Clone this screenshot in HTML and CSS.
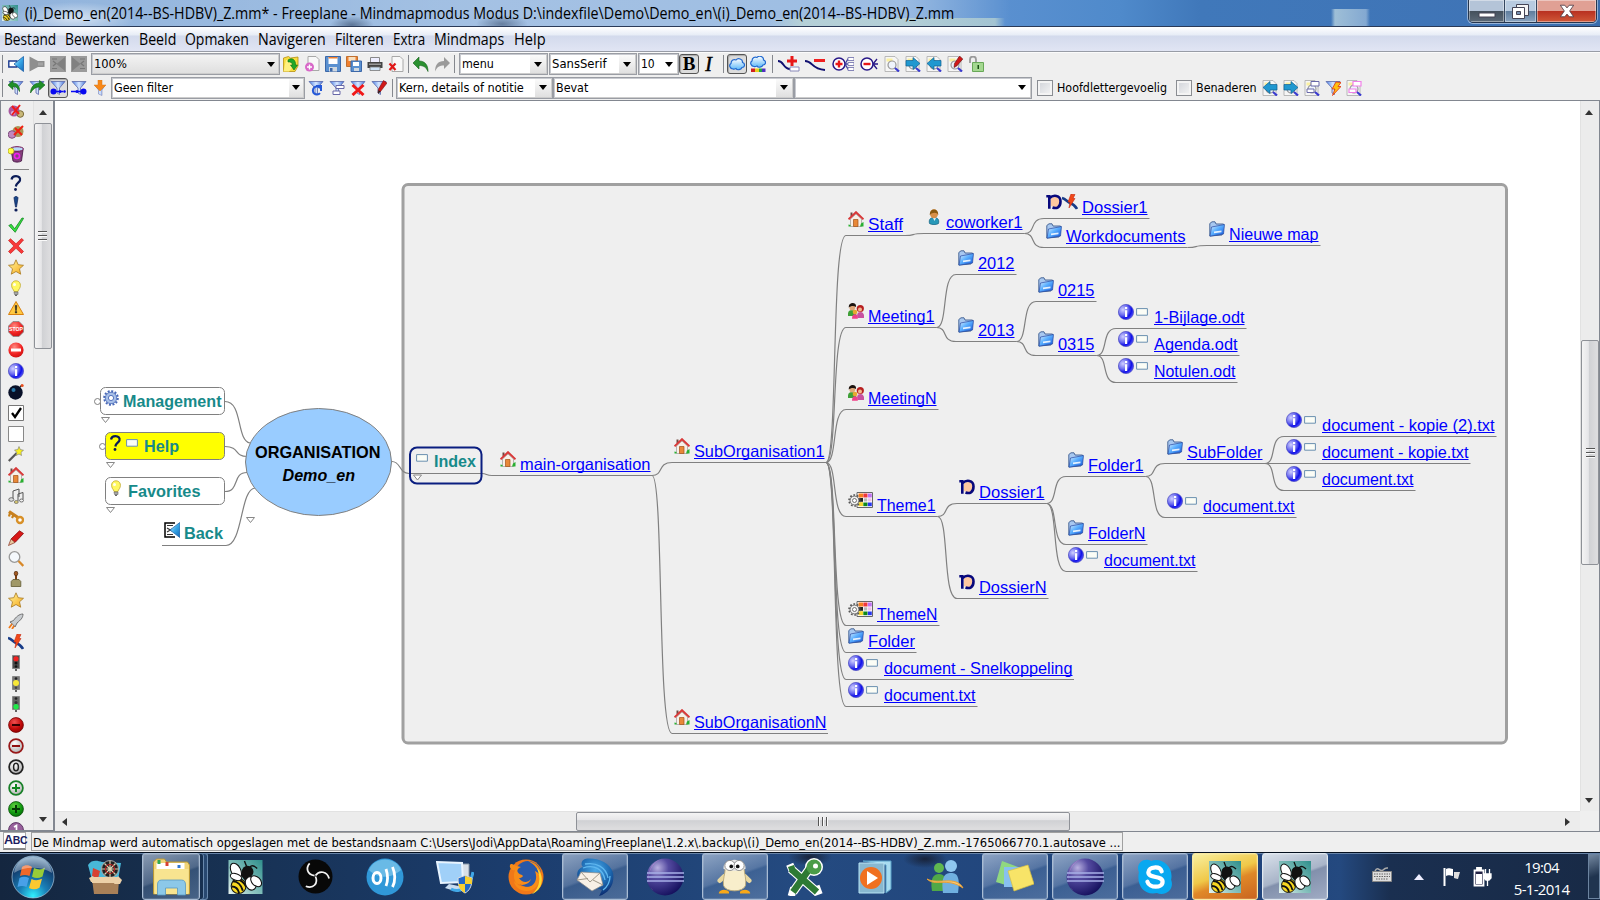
FILE: index.html
```html
<!DOCTYPE html>
<html lang="nl">
<head>
<meta charset="utf-8">
<title>Freeplane</title>
<link rel="stylesheet" href="styles.css">
</head>
<body>
<svg class="defs" aria-hidden="true">
<defs>
<linearGradient id="gBlue" x1="0" y1="0" x2="1" y2="1"><stop offset="0" stop-color="#d8f2ff"/><stop offset=".5" stop-color="#3aa9e8"/><stop offset="1" stop-color="#1268b8"/></linearGradient>
<linearGradient id="gFold" x1="0" y1="0" x2="1" y2="1"><stop offset="0" stop-color="#e8f6ff"/><stop offset=".45" stop-color="#5cb0ff"/><stop offset="1" stop-color="#0c50d8"/></linearGradient>
<radialGradient id="gInfo" cx=".3" cy=".35" r=".8"><stop offset="0" stop-color="#d0d0ff"/><stop offset=".45" stop-color="#6a6af0"/><stop offset=".7" stop-color="#1010e8"/><stop offset="1" stop-color="#6a6aff"/></radialGradient>
<radialGradient id="gRed" cx=".4" cy=".3" r=".8"><stop offset="0" stop-color="#ff8a80"/><stop offset=".6" stop-color="#f02020"/><stop offset="1" stop-color="#c01010"/></radialGradient>
<radialGradient id="gDkRed" cx=".4" cy=".3" r=".8"><stop offset="0" stop-color="#f05050"/><stop offset=".6" stop-color="#c00808"/><stop offset="1" stop-color="#800"/></radialGradient>
<radialGradient id="gGreen" cx=".4" cy=".3" r=".8"><stop offset="0" stop-color="#60d040"/><stop offset=".6" stop-color="#109810"/><stop offset="1" stop-color="#065f06"/></radialGradient>
<radialGradient id="gGrey" cx=".4" cy=".3" r=".8"><stop offset="0" stop-color="#fff"/><stop offset="1" stop-color="#a8a8a8"/></radialGradient>
<linearGradient id="gStar" x1="0" y1="0" x2="1" y2="1"><stop offset="0" stop-color="#fff6a0"/><stop offset="1" stop-color="#f8a818"/></linearGradient>
<radialGradient id="gEcl" cx=".3" cy=".25" r=".85"><stop offset="0" stop-color="#b8b0e0"/><stop offset=".35" stop-color="#544aa0"/><stop offset="1" stop-color="#100c58"/></radialGradient>
<linearGradient id="gTeal" x1="0" y1="1" x2="1" y2="0"><stop offset="0" stop-color="#e8f4f0"/><stop offset=".4" stop-color="#8cc4c0"/><stop offset="1" stop-color="#2f8f8c"/></linearGradient>
<radialGradient id="gOrb" cx=".5" cy=".95" r=".95"><stop offset="0" stop-color="#30f0ff"/><stop offset=".35" stop-color="#1a80b8"/><stop offset=".75" stop-color="#123f70"/><stop offset="1" stop-color="#7fa8c8"/></radialGradient>
<linearGradient id="gCloud" x1="0" y1="0" x2="0" y2="1"><stop offset="0" stop-color="#fff"/><stop offset="1" stop-color="#5cb8f8"/></linearGradient>
<linearGradient id="gFun" x1="0" y1="0" x2="1" y2="0"><stop offset="0" stop-color="#4a80e8"/><stop offset=".5" stop-color="#d8e8ff"/><stop offset="1" stop-color="#4070d8"/></linearGradient>
<radialGradient id="gTb" cx=".5" cy=".3" r=".7"><stop offset="0" stop-color="#48a8e8"/><stop offset=".6" stop-color="#1c68b0"/><stop offset="1" stop-color="#0c2c70"/></radialGradient>

<symbol id="funnel" viewBox="0 0 16 16"><path d="M1 1.500h14L9.500 8v6.500L7 13V8z" fill="url(#gFun)" stroke="#5a68a8" stroke-width=".8"/></symbol>
<symbol id="page" viewBox="0 0 16 16"><path d="M1 .5h10l3 3v12H1z" fill="#f6f6f6" stroke="#aaa" stroke-width=".8"/><path d="M2.500 2.500h6v3h-6z" fill="#fbf0a0"/></symbol>
<symbol id="pagemag" viewBox="0 0 16 16"><use href="#page"/><circle cx="8" cy="9" r="4" fill="#eef4ff" fill-opacity=".8" stroke="#999" stroke-width="1.200"/><path d="M11 12l4 3.500" stroke="#3a3ad0" stroke-width="2.200"/></symbol>
<symbol id="back" viewBox="0 0 16 16"><path d="M.8 5h8v6h-8z" fill="#fff" stroke="#1a3a90" stroke-width="1.400"/><path d="M15.500.5v15L6 8z" fill="url(#gBlue)" stroke="#1a60a8" stroke-width=".8"/></symbol>
<symbol id="fwd" viewBox="0 0 16 16"><path d="M.5.5v15L9 11h6.500V5H9z" fill="#8f8f8f"/><path d="M9 6.500h5v3H9z" fill="#a4a4a4"/></symbol>
<symbol id="gback" viewBox="0 0 16 16"><path d="M0 0h16v16H0z" fill="#9a9a9a"/><path d="M2 3h5M2 12.500h5M3 5l3 2.500L3 10" fill="none" stroke="#777" stroke-width="1.200"/><path d="M15 1v14L6.500 8z" fill="#808080"/></symbol>
<symbol id="gfwd" viewBox="0 0 16 16"><path d="M0 0h16v16H0z" fill="#9a9a9a"/><path d="M9 3h5M9 12.500h5M13 5l-3 2.500L13 10" fill="none" stroke="#777" stroke-width="1.200"/><path d="M1 1v14l8.500-7z" fill="#808080"/></symbol>
<symbol id="open" viewBox="0 0 16 16"><path d="M.5 2l5-1.500 2 1.500L15 1v9l-3 5.500H.5z" fill="#f8dc40" stroke="#b89010" stroke-width=".8"/><path d="M3 4h6v8l-3 3.500H.5z" fill="#fff080"/><path d="M5 4c4-3 8 0 7.500 5h2L11 14 7.500 9h2C9.500 6.500 7 5.500 5 6z" fill="#20a828" stroke="#0a7010" stroke-width=".6"/></symbol>
<symbol id="new" viewBox="0 0 16 16"><path d="M4 .5h8l3 3v11H4z" fill="#f8f8f8" stroke="#a8a8a8"/><circle cx="5.500" cy="11" r="4.500" fill="#d868c8"/><path d="M5.500 8.500v5M3 11h5" stroke="#fff" stroke-width="1.400"/></symbol>
<symbol id="save" viewBox="0 0 16 16"><path d="M.5.5h15v15H.5z" fill="#5a90d0" stroke="#3c68a8"/><path d="M3.500 1h9v7h-9z" fill="#fff"/><path d="M3.500 1h9v1.500h-9z" fill="#f08030"/><path d="M4 11h8v4.500H4z" fill="#d0d8e0"/><path d="M5 12h2.500v3.500H5z" fill="#3c68a8"/></symbol>
<symbol id="saveas" viewBox="0 0 16 16"><path d="M.5.5h11v10H.5z" fill="#f08030" stroke="#c07030"/><path d="M2.500 1h7v4h-7z" fill="#f8e0c0"/><path d="M5 5h10.500v10.500H5z" fill="#5a90d0" stroke="#3c68a8"/><path d="M7 6h6v4H7z" fill="#fff"/><path d="M8 12h5v3H8z" fill="#d0d8e0"/></symbol>
<symbol id="print" viewBox="0 0 16 16"><path d="M3.500 1.500h9v5h-9z" fill="#eef" stroke="#888"/><path d="M.5 6h15v6H.5z" fill="#444"/><path d="M2 7.500h12V9H2z" fill="#999"/><path d="M3 11h10v3.500H3z" fill="#cfe4f8" stroke="#777" stroke-width=".8"/></symbol>
<symbol id="close" viewBox="0 0 16 16"><path d="M4 .5h8l3 3v12H4z" fill="#f8f8f8" stroke="#a8a8a8"/><path d="M1.500 7.500l6 6.500M7.500 7.500l-6 6.500" stroke="#e01818" stroke-width="2.200"/></symbol>
<symbol id="undo" viewBox="0 0 16 16"><path d="M6 1v4c6 0 9 4 9 10.500C13 11 10.500 9.500 6 9.500V13L0 7z" fill="#2a9030" stroke="#126018" stroke-width=".6"/></symbol>
<symbol id="redo" viewBox="0 0 16 16"><path d="M10 1v4c-6 0-9 4-9 10.500C3 11 5.500 9.500 10 9.500V13l6-6z" fill="#9a9a9a"/></symbol>
<symbol id="funundo" viewBox="0 0 16 16"><use href="#funnel"/><path d="M5 .5V3c4 0 7 3 6.500 8.500C10 8 8 6.500 5 6.500V9.500L0 5z" fill="#209028" stroke="#126018" stroke-width=".6"/></symbol>
<symbol id="funredo" viewBox="0 0 16 16"><use href="#funnel"/><path d="M10.500.5V3c-5 0-9 4-9 10C4 9 6.500 7 10.500 7v3L16 5z" fill="#209028" stroke="#126018" stroke-width=".6"/></symbol>
<symbol id="funa" viewBox="0 0 16 16"><use href="#funnel"/><circle cx="3.500" cy="11.500" r="3" fill="#0808f0"/><path d="M6 11.500h9" stroke="#0808f0" stroke-width="1.500" stroke-dasharray="3 1"/><circle cx="10" cy="11.500" r="1.500" fill="#0808f0"/><circle cx="14.500" cy="11.500" r="1.300" fill="#0808f0"/></symbol>
<symbol id="funb" viewBox="0 0 16 16"><use href="#funnel"/><circle cx="12.500" cy="11.500" r="3" fill="#0808f0"/><path d="M0 11.500h10" stroke="#0808f0" stroke-width="1.500"/><circle cx="6" cy="11.500" r="1.500" fill="#0808f0"/></symbol>
<symbol id="func" viewBox="0 0 16 16"><path d="M3 5.500h10L10 10v5.500L6.500 14v-4z" fill="url(#gFun)" stroke="#8088b8" stroke-width=".6"/><path d="M6 0h4v5h4l-6 6-6-6h4z" fill="#f88818" stroke="#d87818" stroke-width=".5"/></symbol>
<symbol id="fund" viewBox="0 0 16 16"><use href="#funnel"/><path d="M12 8a4 4 0 1 0 0 5M8 6h5v5" fill="none" stroke="#2458d8" stroke-width="2"/></symbol>
<symbol id="fune" viewBox="0 0 16 16"><use href="#funnel"/><path d="M7 5.500h8v3H7zM4 11h7v3.500H4z" fill="#fff" stroke="#6868a8"/></symbol>
<symbol id="funx" viewBox="0 0 16 16"><use href="#funnel"/><path d="M2.500 5l11 10M13.500 5l-11 10" stroke="#f01818" stroke-width="3"/></symbol>
<symbol id="funpen" viewBox="0 0 16 16"><use href="#funnel"/><path d="M12.500.5L16 3 9.500 11.500 7 13l.5-4z" fill="#d01818" stroke="#801010" stroke-width=".6"/><path d="M9.500 11.500L7 14l.5-4z" fill="#222"/></symbol>
<symbol id="funflash" viewBox="0 0 16 16"><use href="#funnel"/><path d="M11 2l5 .5-3 4h3L7.500 15.500 10 9H7z" fill="#ffc010" stroke="#e03010" stroke-width=".8"/></symbol>
<symbol id="cloud" viewBox="0 0 16 16"><path d="M4 13C1 13-.5 9 2 7.500 2 4 5 3 7 4c2-2.500 7-1 6.500 2.500 3 1 2.500 5-.5 5C12 14 8 14.500 7 12.500 6 13 5 13.500 4 13z" fill="url(#gCloud)" stroke="#2068d0" stroke-width="1.200"/></symbol>
<symbol id="cloudc" viewBox="0 0 16 16"><use href="#cloud" y="-2.500"/><path d="M1 12.500h4V16H1z" fill="#d02020"/><path d="M5 12.500h4V16H5z" fill="#e8d020"/><path d="M9 12.500h3V16H9z" fill="#20a840"/><path d="M12 12.500h3.500V16H12z" fill="#5030c0"/></symbol>
<symbol id="addn" viewBox="0 0 22 16"><path d="M0 5c6 0 5 8 12 8" fill="none" stroke="#101070" stroke-width="2"/><path d="M12 11h9v4h-9z" fill="#fff" stroke="#8888b8"/><path d="M14 0v10M9 5h10" stroke="#e81818" stroke-width="3"/></symbol>
<symbol id="remn" viewBox="0 0 22 16"><path d="M0 5c8 0 6 8 20 9" fill="none" stroke="#101070" stroke-width="2"/><path d="M9 4.500h11" stroke="#f02020" stroke-width="3"/></symbol>
<symbol id="unf" viewBox="0 0 22 16"><circle cx="7" cy="8" r="6" fill="#fff" stroke="#281888" stroke-width="1.500"/><path d="M7 4.500v7M3.500 8h7" stroke="#e81818" stroke-width="2.400"/><path d="M13 8l3-5h5M13 8l3 5h5M13 8h8" stroke="#4040a0" fill="none" stroke-width="1.300"/><path d="M16 1.500h6v3h-6zM16 6.500h6v3h-6zM16 11.500h6v3h-6z" fill="#fff" stroke="#7878b0" stroke-width=".9"/></symbol>
<symbol id="fol" viewBox="0 0 22 16"><circle cx="8" cy="8" r="6" fill="#fff" stroke="#281888" stroke-width="1.500"/><path d="M4.500 8h7" stroke="#e81818" stroke-width="2.400"/><path d="M14 8l4-5M14 8l4 5M14 8h5" stroke="#281888" fill="none" stroke-width="1.300"/></symbol>
<symbol id="pright" viewBox="0 0 16 16"><use href="#pagemag"/><path d="M1 4.500h7V1.500l7 6L8 13.500v-3.500H1z" fill="#2098d0" stroke="#106090" stroke-width=".7"/></symbol>
<symbol id="pleft" viewBox="0 0 16 16"><use href="#pagemag"/><path d="M15 4.500H8V1.500L1 7.500l7 6v-3.500h7z" fill="#2098d0" stroke="#106090" stroke-width=".7"/></symbol>
<symbol id="ppen" viewBox="0 0 16 16"><use href="#pagemag"/><path d="M12.500 0l3.300 3-6 7L7 11.500l.5-4z" fill="#d01818" stroke="#601010" stroke-width=".6"/></symbol>
<symbol id="pnode" viewBox="0 0 16 16"><use href="#pagemag"/><path d="M7 1.500h8V6H7zM3 9h7v3.500H3z" fill="#fff" stroke="#6868a8"/></symbol>
<symbol id="pnodep" viewBox="0 0 16 16"><use href="#pagemag"/><path d="M7 1.500h8V6H7zM3 9h7v3.500H3z" fill="#fff" stroke="#f080e8" stroke-width="1.200"/></symbol>
<symbol id="lock" viewBox="0 0 16 16"><path d="M2 7V3.500a3 3 0 0 1 6 0V7" fill="none" stroke="#9a9a9a" stroke-width="1.800"/><path d="M4.500 6.500h11v9h-11z" fill="#a4d890" stroke="#68a858"/><path d="M9.500 9h1.500v4H9.500z" fill="#185010"/></symbol>

<symbol id="rm1" viewBox="0 0 16 16"><circle cx="6" cy="8" r="5.500" fill="#a858a0"/><circle cx="12.300" cy="11" r="3.300" fill="#c8b878" stroke="#7a6a38"/><circle cx="5" cy="10" r="2" fill="#dcb8e0"/><path d="M4 3l7 8M12 2L4 12" stroke="#f01818" stroke-width="2"/></symbol>
<symbol id="rm2" viewBox="0 0 16 16"><circle cx="10" cy="7.500" r="5.500" fill="#a89858"/><circle cx="4" cy="10.500" r="3.800" fill="#c088c0" stroke="#805080"/><path d="M7 4l7 7M15 2L6 11" stroke="#f02010" stroke-width="2"/></symbol>
<symbol id="trash" viewBox="0 0 16 16"><path d="M3 4h12l-1.500 11C11 16.500 7 16.500 5 15z" fill="#84407c" stroke="#401040" stroke-width=".8"/><ellipse cx="9" cy="3" rx="6.500" ry="2.300" fill="#b8d8f8" stroke="#701050"/><circle cx="3" cy="5" r="3" fill="#ffff40" stroke="#a09010" stroke-width=".6"/><circle cx="9" cy="10" r="2.500" fill="none" stroke="#f020f0" stroke-width="1.600"/></symbol>
<symbol id="q" viewBox="0 0 16 16"><path d="M3.500 4.500C4 2 6 1.200 8 1.200c3 0 4.500 1.800 4 4C11.600 7.600 8.300 8 7.800 11.500" fill="none" stroke="#0c1c58" stroke-width="2.200"/><circle cx="7.500" cy="14.500" r="1.400" fill="#0c1c58"/></symbol>
<symbol id="ex" viewBox="0 0 16 16"><path d="M6 2c0-2 4-2 4 0L8.500 11h-1z" fill="#184888" stroke="#0c1c58" stroke-width=".7"/><circle cx="8" cy="14" r="1.600" fill="#0c1c58"/></symbol>
<symbol id="ok" viewBox="0 0 16 16"><path d="M.8 8.500l2.500-1.200 3.400 4.500L14 1l1.600.3L7.200 15.300z" fill="#38e040" stroke="#108820" stroke-width=".8"/></symbol>
<symbol id="no" viewBox="0 0 16 16"><path d="M.5 2.500L2.500.8 8 5.800 13.500.5l2 1.500L10.200 8l5.300 5.500-2 2L8 10.300l-5.500 5.200-2-2L5.800 8z" fill="#f83838" stroke="#c82020" stroke-width=".7"/></symbol>
<symbol id="star" viewBox="0 0 16 16"><path d="M8 .8l2.200 4.900 5.300.6-4 3.500 1.200 5.400L8 12.500l-4.700 2.700 1.200-5.400-4-3.500 5.300-.6z" fill="url(#gStar)" stroke="#a87820" stroke-width=".8"/></symbol>
<symbol id="bulb" viewBox="0 0 16 16"><path d="M5.500 10C2 6 3.500.8 8 .8S14 6 10.500 10l-.5 1.500H6z" fill="#fff860" stroke="#c0a830" stroke-width=".8"/><path d="M6 12h4v2.500H6.500z" fill="#aaa" stroke="#666" stroke-width=".6"/><path d="M7 15.300h2" stroke="#444"/><circle cx="6.500" cy="4.500" r="1.500" fill="#fffff0"/></symbol>
<symbol id="warn" viewBox="0 0 16 16"><path d="M8 1.500L15.500 14.500H.5z" fill="#ffc840" stroke="#d88010" stroke-linejoin="round"/><path d="M7.200 5.500h1.600l-.4 5h-.8zM7.300 11.500h1.400V13H7.300z" fill="#222" stroke="#222" stroke-width=".5"/></symbol>
<symbol id="stop" viewBox="0 0 16 16"><path d="M5 .5h6L15.500 5v6L11 15.500H5L.5 11V5z" fill="url(#gRed)" stroke="#888" stroke-width=".8"/><text x="8" y="10" text-anchor="middle" font-size="5.200" font-weight="700" fill="#fff" font-family="Liberation Sans">STOP</text></symbol>
<symbol id="deny" viewBox="0 0 16 16"><circle cx="8" cy="8" r="7.600" fill="url(#gRed)"/><path d="M3 6.500h10v3H3z" fill="#fff"/></symbol>
<symbol id="info" viewBox="0 0 16 16"><circle cx="8" cy="8" r="7.600" fill="url(#gInfo)" stroke="#4848c0" stroke-width=".7"/><path d="M7 3h2.200v2H7zM7 6.300h2.200V13H7z" fill="#fff"/></symbol>
<symbol id="bomb" viewBox="0 0 16 16"><circle cx="7.500" cy="8.500" r="7.200" fill="#081028"/><circle cx="5.500" cy="6" r="2" fill="#2878a8"/><path d="M12 3l2-2" stroke="#333" stroke-width="1.500"/><circle cx="14.200" cy="1.500" r="1.500" fill="#e85020"/></symbol>
<symbol id="chk" viewBox="0 0 16 16"><path d="M.5.5h15v15H.5z" fill="#fff" stroke="#777"/><path d="M4 8l3 4 6-9" fill="none" stroke="#000" stroke-width="2.300"/></symbol>
<symbol id="unchk" viewBox="0 0 16 16"><path d="M.5.5h15v15H.5z" fill="#fff" stroke="#888"/></symbol>
<symbol id="wand" viewBox="0 0 16 16"><path d="M.8 15l8-8" stroke="#555" stroke-width="2.200"/><path d="M11 .5l1.300 3 3.200.8-2.500 2 .5 3.200L11 8 8 9.500l.8-3.200L6.500 4l3.300-.4z" fill="#f8f020" stroke="#777" stroke-width=".6"/></symbol>
<symbol id="house" viewBox="0 0 16 16"><path d="M2.500 8L8 3l5.500 5v7.500h-11z" fill="#f8f0e8" stroke="#999" stroke-width=".7"/><path d="M2.500 1.500h2V5h-2z" fill="#704840"/><path d="M.5 8.300L8 1.200l7.500 7.100" fill="none" stroke="#d83838" stroke-width="2"/><path d="M5.500 8.500h4.500v7H5.500z" fill="#e88838" stroke="#a05018" stroke-width=".7"/><path d="M12 15.500l1-3 2.500-1.500v4.500zM.5 15.500v-2l2 .5v1.500z" fill="#28b030"/></symbol>
<symbol id="note" viewBox="0 0 16 16"><path d="M5 11V3l6-2v8M10 13V6l5-1.500v7" fill="none" stroke="#555"/><ellipse cx="3.300" cy="11.500" rx="2.500" ry="1.800" fill="#ddd" stroke="#555" stroke-width=".8"/><ellipse cx="8.300" cy="14" rx="2" ry="1.500" fill="#d8c870" stroke="#666" stroke-width=".7"/><ellipse cx="13.500" cy="12.500" rx="2" ry="1.500" fill="#eee" stroke="#555" stroke-width=".8"/></symbol>
<symbol id="key" viewBox="0 0 16 16"><path d="M1 2.500l9 6" stroke="#c88020" stroke-width="3.200"/><path d="M2 4l-1 3.500M5.500 6L4 9" stroke="#c88018" stroke-width="2.200"/><circle cx="12" cy="11" r="3" fill="#fff" stroke="#d89028" stroke-width="2.400"/></symbol>
<symbol id="pen" viewBox="0 0 16 16"><path d="M11.500.8L15.500 3.500 7 12.500 3 9z" fill="#d81818" stroke="#880c0c" stroke-width=".8"/><path d="M3 9l4 3.500L.5 15.500z" fill="#e8c8a0" stroke="#883020" stroke-width=".7"/></symbol>
<symbol id="mag" viewBox="0 0 16 16"><circle cx="6.500" cy="6" r="5.300" fill="#f4f8fc" stroke="#999" stroke-width="1.300"/><path d="M10.500 10l4.800 5" stroke="#d88828" stroke-width="2.300"/></symbol>
<symbol id="stamp" viewBox="0 0 16 16"><path d="M7 3h2v6H7z" fill="#804010"/><ellipse cx="8" cy="2.500" rx="1.800" ry="2.300" fill="#a05820" stroke="#50280c" stroke-width=".7"/><path d="M5 8.500h6l1.800 2v5H3.200v-5z" fill="#a09868" stroke="#605830" stroke-width=".8"/></symbol>
<symbol id="rocket" viewBox="0 0 16 16"><path d="M15 1c-4 0-7 3-9.500 6.500L2 9l3.500 3L7 14l2-4c3.500-3 6-5 6-9z" fill="#c8ccd0" stroke="#666" stroke-width=".9"/><path d="M4 11l-3 4M6 13l-2 3" stroke="#f07818" stroke-width="1.800"/></symbol>
<symbol id="flash" viewBox="0 0 16 16"><path d="M0 4c4 1 5 4 8 5s5 2 7 6" fill="none" stroke="#183c88" stroke-width="2.600"/><path d="M9 0l4 .5-2 4h2L7 14l1-6H6z" fill="#f04818" stroke="#c82810" stroke-width=".6"/></symbol>
<symbol id="tlr" viewBox="0 0 16 16"><path d="M4.500.5h7v13h-7z" fill="#4c4c4c" stroke="#888"/><circle cx="8" cy="3.800" r="2.600" fill="#f02020"/><circle cx="8" cy="8" r="1.500" fill="#111"/><circle cx="8" cy="11.500" r="1.300" fill="#111"/><path d="M8 14v2" stroke="#333" stroke-width="1.500"/></symbol>
<symbol id="tly" viewBox="0 0 16 16"><path d="M4.500.5h7v13h-7z" fill="#777" stroke="#888"/><circle cx="8" cy="7" r="3" fill="#f8e838"/><circle cx="8" cy="2.500" r="1.300" fill="#222"/><circle cx="8" cy="11.800" r="1.200" fill="#444"/><path d="M8 14v2" stroke="#333" stroke-width="1.500"/></symbol>
<symbol id="tlg" viewBox="0 0 16 16"><path d="M4.500.5h7v13h-7z" fill="#666" stroke="#888"/><circle cx="8" cy="10.800" r="2.700" fill="#20e848"/><circle cx="8" cy="2.500" r="1.300" fill="#222"/><circle cx="8" cy="6.500" r="1.500" fill="#333"/><path d="M8 14v2" stroke="#333" stroke-width="1.500"/></symbol>
<symbol id="m2" viewBox="0 0 16 16"><circle cx="8" cy="8" r="7.400" fill="url(#gDkRed)" stroke="#700" stroke-width=".8"/><path d="M4 7h8v2H4z" fill="#300"/></symbol>
<symbol id="m1" viewBox="0 0 16 16"><circle cx="8" cy="8" r="6.900" fill="url(#gGrey)" stroke="#981818" stroke-width="1.700"/><path d="M4 7h8v2H4z" fill="#901010"/></symbol>
<symbol id="z0" viewBox="0 0 16 16"><circle cx="8" cy="8" r="6.900" fill="url(#gGrey)" stroke="#222" stroke-width="1.700"/><ellipse cx="8" cy="8" rx="2.400" ry="3.800" fill="none" stroke="#222" stroke-width="1.500"/></symbol>
<symbol id="p1" viewBox="0 0 16 16"><circle cx="8" cy="8" r="6.900" fill="url(#gGrey)" stroke="#188028" stroke-width="1.700"/><path d="M4 8h8M8 4v8" stroke="#108820" stroke-width="2"/></symbol>
<symbol id="p2" viewBox="0 0 16 16"><circle cx="8" cy="8" r="7.400" fill="url(#gGreen)" stroke="#064f06" stroke-width=".8"/><path d="M4 8h8M8 4v8" stroke="#043804" stroke-width="2"/></symbol>
<symbol id="n1" viewBox="0 0 16 16"><circle cx="8" cy="8" r="7.400" fill="#98609c" stroke="#603868"/><path d="M6 5l2.500-1.500V12" fill="none" stroke="#fff" stroke-width="1.700"/></symbol>

<symbol id="folder" viewBox="0 0 16 16"><path d="M.8 15V2.500L3 .8h3L7 3h7.500v3L13 14z" fill="#a8c8f0" stroke="#3c5c90" stroke-width=".9"/><path d="M1 15.200L2.500 6l13-2.500L14.500 13z" fill="url(#gFold)" stroke="#2848a0" stroke-width=".7"/><path d="M5 10.500l7.500-1v1.800L5 12.300z" fill="#fff" opacity=".85"/></symbol>
<symbol id="note-r" viewBox="0 0 12 8"><path d="M.6.6h10.800v6.600H.6z" fill="#fbfdf6" stroke="#6a90b0"/></symbol>
<symbol id="gear" viewBox="0 0 16 16"><circle cx="8" cy="8" r="6.800" fill="none" stroke="#4868b8" stroke-width="2" stroke-dasharray="2 1.560"/><circle cx="8" cy="8" r="5.700" fill="#a8c0e8" stroke="#4868b8" stroke-width=".8"/><circle cx="8" cy="8" r="2.600" fill="#fff" stroke="#4868b8" stroke-width=".9"/></symbol>
<symbol id="person" viewBox="0 0 16 16"><path d="M3.500 14.500c-1-4 1-6 4.500-6s5.500 2 4.500 6c-2 1.500-7 1.500-9 0z" fill="#2898b8" stroke="#106080" stroke-width=".7"/><path d="M7 9l1.500 3L10 9z" fill="#e8f4f8"/><ellipse cx="8" cy="4.800" rx="4" ry="4.500" fill="#d89048"/><path d="M3.800 6C3-1.500 13-1.500 12.200 6c-1-3-6-3-8.400 0z" fill="#8a5a10"/></symbol>
<symbol id="people" viewBox="0 0 16 16"><path d="M0 13c-.5-4 1-6 4-6s5 2 4 6z" fill="#40a038"/><ellipse cx="4.300" cy="4" rx="3" ry="3.500" fill="#e0a878"/><path d="M.8 4.500C0-1 9-1.500 8 4 6 2.500 3 2.500 .8 4.500z" fill="#1c1410"/><path d="M9.500 15c-1-4 0-6 3-6s4 3 3.500 6z" fill="#c850a0"/><circle cx="12.300" cy="5.500" r="3.600" fill="#b82020"/><circle cx="12" cy="6.500" r="2" fill="#f0b890"/><circle cx="7" cy="9" r="2.300" fill="#e8a830"/><path d="M4 15.800c0-3 1-4.500 3-4.500s3 2 2.800 4.500z" fill="#f04088"/></symbol>
<symbol id="dos" viewBox="0 0 16 16"><path d="M5 4l6-1.500 3 5-3 6.500-6-2z" fill="#ffc8a0"/><path d="M.3 2.300h3v12.500" fill="none" stroke="#08087c" stroke-width="2.600"/><path d="M3.500 4C7 .8 14.500.5 14.500 7.500c0 6-4 7.500-8 6" fill="none" stroke="#08087c" stroke-width="2.600"/></symbol>
<symbol id="theme" viewBox="0 0 25 16"><path d="M9 .5h15.500v15H9z" fill="#fff" stroke="#666"/><path d="M10.500 1.500H15v4h-4.500z" fill="#f88020"/><path d="M15.300 1.500h4.200v4h-4.200z" fill="#f03838"/><path d="M19.800 1.500h4v4h-4z" fill="#c070f0"/><path d="M10.500 6H15v3.800h-4.500z" fill="#222"/><path d="M15.800 6.300h3.500v3.200h-3.500z" fill="#b8b8b8"/><path d="M20 6.300h3.500v3.200H20z" fill="#f0c0e8"/><path d="M10.500 10.200H15v4h-4.500z" fill="#f8d830"/><path d="M15.300 10.500h4.200v3.700h-4.200z" fill="#108818"/><path d="M19.800 10.500h4v3.700h-4z" fill="#2838f0"/><circle cx="6.500" cy="8.500" r="5.500" fill="none" stroke="#555" stroke-width="1.600" stroke-dasharray="1.700 1.750"/><circle cx="6.500" cy="8.500" r="4.400" fill="#f0f0f0" stroke="#555" stroke-width=".8"/><circle cx="6.500" cy="8.500" r="2" fill="#fff" stroke="#555" stroke-width=".8"/></symbol>
<symbol id="goback" viewBox="0 0 16 16"><path d="M11 1H1v14h10" fill="#fff" stroke="#000" stroke-width="1.500"/><path d="M3 3.500h6M3 12.500h6M3 6l5 3M3 10l5-3" stroke="#333" stroke-width="1.200"/><path d="M15.800.5v15L6 8z" fill="url(#gBlue)" stroke="#1a60a8" stroke-width=".7"/></symbol>

<symbol id="bee" viewBox="0 0 32 32"><path d="M0 0h32v32H0z" fill="url(#gTeal)"/><path d="M17 6L15 1M20 7c2-3 5-1 7 1" stroke="#111" fill="none" stroke-width="1.300"/><circle cx="18" cy="11" r="5.500" fill="#111"/><ellipse cx="9.500" cy="24.500" rx="7" ry="7" fill="#f8d820" stroke="#111"/><path d="M4 20c4 0 8 3 9.500 9M3 25c3 0 6 2 7 6M8 18c4 1 7 4 8.500 7" fill="none" stroke="#111" stroke-width="1.800"/><ellipse cx="7" cy="10" rx="4.500" ry="7.500" transform="rotate(-28 7 10)" fill="#fff" stroke="#111"/><ellipse cx="21" cy="22" rx="5" ry="6.500" transform="rotate(-20 21 22)" fill="#fff" stroke="#111"/><ellipse cx="26" cy="20" rx="6" ry="4" transform="rotate(45 26 20)" fill="#fff" stroke="#111"/><ellipse cx="7" cy="16" rx="5.500" ry="3" transform="rotate(20 7 16)" fill="#fff" stroke="#111"/><path d="M13 13l4 5" stroke="#111" stroke-width="4"/></symbol>
<symbol id="orb" viewBox="0 0 44 44"><circle cx="22" cy="22" r="21" fill="url(#gOrb)" stroke="#a8c8e0" stroke-opacity=".7"/><path d="M11 12c3-2.500 7-2 10 0l-2.500 9c-3-1.500-6-1.500-9.500 0z" fill="#f06828"/><path d="M23 13c4 2 8 2 11-.5l-2.500 9c-3.500 2-7 2-10.500.3z" fill="#98cc38"/><path d="M8.500 23c3-1.800 6.500-1.500 9.500 0l-2.500 9c-3-1.500-6-1.500-9 0z" fill="#48a0e8"/><path d="M20.500 24c3.500 1.800 7 1.500 10.500-.3l-2.500 9c-3.500 2-7 2-10.500.3z" fill="#fcc830"/><path d="M3 18C5 6 13 2 22 2s17 4 19 16c-10-7-28-7-38 0z" fill="#fff" opacity=".35"/></symbol>
<symbol id="games" viewBox="0 0 36 36"><path d="M1 6c4-6 10-4 14-3l19 1-3 17H5z" fill="#48b8d8"/><path d="M6 9l7 3-2 8-6-3z" fill="#d84030"/><circle cx="23" cy="10" r="8.500" fill="#222" stroke="#aaa"/><path d="M23 2v16M15 10h16M17.500 4.500l11 11M28.500 4.500l-11 11" stroke="#d8d0b0" stroke-width="1.200"/><circle cx="23" cy="10" r="4.500" fill="none" stroke="#c02020" stroke-width="1.200"/><path d="M5 20h27l-1 15H7z" fill="#a88058"/><path d="M2 19l4-2 3 6H4zM31 17l4 4-2 4h-6zM5 18h27v6H5z" fill="#ecd0a8"/></symbol>
<symbol id="expl" viewBox="0 0 38 38"><path d="M1 4l3-3h8l2 3h21l2 3v29H1z" fill="#f0d478" stroke="#b89838"/><path d="M4 5h28v8H4z" fill="#fff"/><path d="M5 2h3v4H5z" fill="#30a850"/><path d="M13 4h3v4h-3z" fill="#d84030"/><path d="M25 7h3v3h-3z" fill="#3078d0"/><path d="M2 11h34v25H2z" fill="#f8e490"/><path d="M5 37V27c0-3 1-5 4-5h20c3 0 4 2 4 5v10h-8v-7H13v7z" fill="#8cc8e8" stroke="#5898c0" stroke-width=".8"/></symbol>
<symbol id="obs" viewBox="0 0 36 36"><circle cx="18" cy="18" r="17.500" fill="#080808"/><path d="M17 17C9 16 8 9 12 4.500M18 17c4-6 12-4 14 3M18 18c3 7-2 13-10 10" fill="none" stroke="#f4f4f4" stroke-width="1.800"/></symbol>
<symbol id="oll" viewBox="0 0 38 38"><circle cx="19" cy="19" r="18.500" fill="#3098d8"/><path d="M3 12C8-2 30-2 35 12c-9 8-22 10-32 0z" fill="#90d0f0" opacity=".6"/><ellipse cx="11" cy="20" rx="4" ry="5.500" fill="none" stroke="#fff" stroke-width="3"/><path d="M20 11c2 6 2 12 0 17M26.500 9c3 7 3 14 0 20" fill="none" stroke="#fff" stroke-width="2.800"/></symbol>
<symbol id="pc" viewBox="0 0 38 34"><path d="M26 4h7v18h-7z" fill="#d8e0e8" stroke="#8898a8"/><path d="M1 2l25 1 1 19-22 1z" fill="#a0d0f8" stroke="#e8f4ff" stroke-width="2"/><path d="M13 24l-4 4 13 4 5-5z" fill="#c8dcf0"/><path d="M15 29c8 4 19 0 22-17" fill="none" stroke="#40a8e8" stroke-width="3"/><path d="M22 18l7-2.500 7 2.500c0 9-3 13-7 15-4-2-7-6-7-15z" fill="#2068c8" stroke="#ddd"/><path d="M29 16v8h7c0-2 0-4-.3-6zM29 24v9c-4-2-6-5-6.700-9z" fill="#f8d030"/></symbol>
<symbol id="ff" viewBox="0 0 38 38"><circle cx="19" cy="19" r="17.500" fill="#f07818"/><circle cx="21" cy="16" r="13" fill="#2858a8"/><path d="M21 3c8 1 15 8 13 19 0-6-4-8-6-9 3 8 0 16-9 16C8 29 5 20 8 12 3 14 1 5 5 6c4 2 6 2 9 3-5 2-5 6 1 8 2 1 0 3-3 3 3 5 9 5 12 1-3 8-14 7-17 2 1 8 10 12 18 9 12-6 10-22-4-29z" fill="#f88c18"/><path d="M30 10c8 8 6 22-5 26 8-6 9-16 5-26z" fill="#ffd830"/></symbol>
<symbol id="tb" viewBox="0 0 38 38"><path d="M9 1C18-1 34 3 37 15c2 11-4 20-14 23l3-6L4 24C-2 15 3 10 7 9 4 6 6 2 9 1z" fill="url(#gTb)"/><path d="M9 6c11-2 21 3 23 14M7 10c11-4 20 1 22 12M34 18c0 6-3 11-7 14" fill="none" stroke="#60b8f0" stroke-width="1.300"/><path d="M5 14l19 1 3 12-11 6L1 22z" fill="#f8f0e6" stroke="#888" stroke-width=".7"/><path d="M5 14l9 10 10-9M1 22l11-1.500M27 27l-10-5" stroke="#a09888" fill="none"/></symbol>
<symbol id="ecl" viewBox="0 0 38 38"><circle cx="19" cy="19" r="18.500" fill="url(#gEcl)"/><path d="M14 1.500C2 6-2 26 9 34-1 28 1 7 14 1.500z" fill="#e8a0d8"/><path d="M1 15h37M1 19h37M1 23h37" stroke="#a8b0e8" stroke-width="1.500"/></symbol>
<symbol id="peng" viewBox="0 0 38 38"><path d="M8 18L3 23M30 18l5 5" stroke="#e8d8a0" stroke-width="5" stroke-linecap="round"/><path d="M9 8h20c1 8 3 14 2 20-2 8-22 8-24 0C6 22 9 16 9 8z" fill="#f8eecb" stroke="#b8a878"/><path d="M2 36c2-4 8-4 11-1v2H2zM25 35c3-3 9-3 11 1v1H25z" fill="#f8a818"/><path d="M7 10C6-3 32-3 31 10c-6 3-18 3-24 0z" fill="#e4e4e4"/><circle cx="14" cy="6.500" r="5.500" fill="#fff" stroke="#888"/><circle cx="24" cy="6.500" r="5.500" fill="#fff" stroke="#888"/><circle cx="15.500" cy="7.500" r="2" fill="#111"/><circle cx="22.500" cy="7.500" r="2" fill="#111"/></symbol>
<symbol id="cham" viewBox="0 0 38 38"><path d="M5 11l26 23M7 34L24 10M2 12l7-3M27 34l8-3M3 33l7 2" stroke="#fff" stroke-width="9" stroke-linejoin="round"/><circle cx="28" cy="9" r="9" fill="#fff"/><path d="M5 11l26 23M7 34L24 10M3 12l6-2" stroke="#2d7a34" stroke-width="6.500"/><circle cx="28" cy="9" r="7.500" fill="#4a9c48"/><circle cx="29.500" cy="8" r="2.500" fill="#fff"/></symbol>
<symbol id="wmp" viewBox="0 0 34 34"><path d="M5 1h28v28l-5 4V5z" fill="#a8dcf0" stroke="#58a0c8"/><path d="M1 3h25v30H1z" fill="#88b8d0" stroke="#b8e4f4"/><circle cx="13" cy="18" r="11" fill="#f07020"/><path d="M9 11l11 7-11 7z" fill="#fff"/></symbol>
<symbol id="msn" viewBox="0 0 38 34"><circle cx="13" cy="8" r="5" fill="#60b850"/><path d="M6 31c-2-12 1-17 7-17s8 5 7 17z" fill="#50a848"/><circle cx="25" cy="6" r="6" fill="#90c8f0"/><path d="M17 33c-2-15 1-20 8-20s9 5 7 20z" fill="#70b0e0"/><path d="M1 19c8 8 20-2 36 9C30 15 12 25 1 19z" fill="#f8c870" stroke="#e8a038"/></symbol>
<symbol id="sticky" viewBox="0 0 38 32"><path d="M6 0l16 6-6 20-16-5z" fill="#90d880"/><path d="M8 6h19v20H8z" fill="#88c0f0"/><path d="M12 10l20-6 6 19-20 7z" fill="#f8e468" stroke="#d8c040" stroke-width=".7"/></symbol>
<symbol id="skype" viewBox="0 0 38 38"><path d="M2 14C-2 4 8-2 15 2c12-4 24 7 21 20 4 10-6 18-15 14C8 39-1 28 2 14z" fill="#08a8f0"/><path d="M26 13c-2-6-14-5-14 1 0 7 15 3 15 10 0 7-14 7-16 0" fill="none" stroke="#fff" stroke-width="4.500" stroke-linecap="round"/></symbol>
</defs>
</svg>

<div class="window">
  <header class="titlebar">
    <svg class="ic16"><use href="#bee"/></svg>
    <span class="title fit" data-w="929">(i)_Demo_en(2014--BS-HDBV)_Z.mm* - Freeplane - Mindmapmodus Modus D:\indexfile\Demo\Demo_en\(i)_Demo_en(2014--BS-HDBV)_Z.mm</span>
    <div class="winctl">
      <div class="wbtn min"><svg width="18" height="6"><path d="M1 1h16v4H1z" fill="#fff" stroke="#445"/></svg></div>
      <div class="wbtn max"><svg width="19" height="17"><path d="M5.500 1.500h12v11h-12z" fill="#f4f4f4" stroke="#445"/><path d="M1.500 4.500h12v11h-12z" fill="#fff" stroke="#445"/><path d="M5.500 8.500h4v3h-4z" fill="#7890b0" stroke="#445"/></svg></div>
      <div class="wbtn cls"><svg width="16" height="14" viewBox="0 0 18 15"><path d="M1.500 1h5L9 4l2.500-3h5l-4.500 6.500 4.500 6.500h-5L9 11l-2.500 3h-5L6 7.500z" fill="#fff" stroke="#534048"/></svg></div>
    </div>
  </header>
  <nav class="menubar">
    <span class="fit" data-w="52">Bestand</span><span class="fit" data-w="64">Bewerken</span><span class="fit" data-w="37.500">Beeld</span><span class="fit" data-w="64">Opmaken</span><span class="fit" data-w="68">Navigeren</span><span class="fit" data-w="49">Filteren</span><span class="fit" data-w="32">Extra</span><span class="fit" data-w="70.500">Mindmaps</span><span class="fit" data-w="32">Help</span>
  </nav>
  <div class="toolbars">
    <div class="tb">
      <i class="sep first"></i>
      <svg><use href="#back"/></svg><svg><use href="#fwd"/></svg><svg><use href="#gback"/></svg><svg><use href="#gfwd"/></svg>
      <div class="combo grey w189"><span class="fit" data-w="33">100%</span><b></b></div>
      <svg class="g3"><use href="#open"/></svg><svg><use href="#new"/></svg><svg><use href="#save"/></svg><svg><use href="#saveas"/></svg><svg><use href="#print"/></svg><svg><use href="#close"/></svg>
      <i class="sep"></i>
      <svg><use href="#undo"/></svg><svg><use href="#redo"/></svg>
      <i class="sep"></i>
      <div class="combo w89"><span class="fit" data-w="32">menu</span><b></b></div>
      <div class="combo w88"><span class="fit" data-w="55">SansSerif</span><b></b></div>
      <div class="combo flat w41"><span class="fit" data-w="14">10</span><b></b></div>
      <div class="tgl bold">B</div><div class="ital">I</div>
      <i class="sep s2"></i>
      <div class="tgl"><svg><use href="#cloud"/></svg></div>
      <svg class="g3"><use href="#cloudc"/></svg>
      <i class="sep s3"></i>
      <svg class="wide"><use href="#addn"/></svg><svg class="wide"><use href="#remn"/></svg><svg class="wide"><use href="#unf"/></svg><svg class="wide last"><use href="#fol"/></svg>
      <svg><use href="#pagemag"/></svg><svg><use href="#pright"/></svg><svg><use href="#pleft"/></svg><svg><use href="#ppen"/></svg><svg><use href="#lock"/></svg>
    </div>
    <div class="tb">
      <i class="sep first"></i>
      <svg><use href="#funundo"/></svg><svg class="tight"><use href="#funredo"/></svg><div class="tgl"><svg><use href="#funa"/></svg></div><svg class="g3"><use href="#funb"/></svg><svg><use href="#func"/></svg>
      <div class="combo w193"><span class="fit" data-w="59">Geen filter</span><b></b></div>
      <svg class="g3"><use href="#fund"/></svg><svg><use href="#fune"/></svg><svg><use href="#funx"/></svg><svg class="tight"><use href="#funpen"/></svg>
      <i class="sep s4"></i>
      <div class="combo w157"><span class="fit" data-w="125">Kern, details of notitie</span><b></b></div>
      <div class="combo w242"><span class="fit" data-w="32">Bevat</span><b></b></div>
      <div class="combo flat w238"><b></b></div>
      <div class="cb"></div><span class="fit" data-w="110">Hoofdlettergevoelig</span>
      <div class="cb c2"></div><span class="fit" data-w="61">Benaderen</span>
      <svg class="g6"><use href="#pleft"/></svg><svg><use href="#pright"/></svg><svg><use href="#pnode"/></svg><svg><use href="#funflash"/></svg><svg><use href="#pnodep"/></svg>
    </div>
  </div>
  <main class="work">
    <aside class="icons">
      <svg><use href="#rm1"/></svg><svg><use href="#rm2"/></svg><svg class="bin"><use href="#trash"/></svg>
      <i></i>
      <svg><use href="#q"/></svg><svg><use href="#ex"/></svg><svg><use href="#ok"/></svg><svg><use href="#no"/></svg><svg><use href="#star"/></svg><svg><use href="#bulb"/></svg><svg><use href="#warn"/></svg><svg><use href="#stop"/></svg><svg><use href="#deny"/></svg><svg><use href="#info"/></svg><svg><use href="#bomb"/></svg><svg><use href="#chk"/></svg><svg><use href="#unchk"/></svg><svg><use href="#wand"/></svg><svg><use href="#house"/></svg><svg><use href="#note"/></svg><svg><use href="#key"/></svg><svg><use href="#pen"/></svg><svg><use href="#mag"/></svg><svg><use href="#stamp"/></svg><svg><use href="#star"/></svg><svg><use href="#rocket"/></svg><svg><use href="#flash"/></svg><svg><use href="#tlr"/></svg><svg><use href="#tly"/></svg><svg><use href="#tlg"/></svg><svg><use href="#m2"/></svg><svg><use href="#m1"/></svg><svg><use href="#z0"/></svg><svg><use href="#p1"/></svg><svg><use href="#p2"/></svg><svg><use href="#n1"/></svg>
    </aside>
    <div class="vscroll left"><em class="up"></em><div class="thumb"><u></u></div><em class="down"></em></div>
    <section class="view">
      <svg id="map" viewBox="55 101 1524 710"></svg>
      <div class="vscroll right"><em class="up"></em><div class="thumb"><u></u></div><em class="down"></em></div>
      <div class="hscroll"><em class="lt"></em><div class="thumb"><u></u></div><em class="rt"></em></div>
      <div class="corner"></div>
    </section>
  </main>
  <footer class="status">
    <div class="abc">A<small>BC</small></div>
    <div class="msg"><span class="fit" data-w="1088">De Mindmap werd automatisch opgeslagen met de bestandsnaam C:\Users\Jodi\AppData\Roaming\Freeplane\1.2.x\.backup\(i)_Demo_en(2014--BS-HDBV)_Z.mm.-1765066770.1.autosave ...</span></div>
  </footer>
</div>
<div class="taskbar">
  <div class="t t-orb"><svg width="44" height="44"><use href="#orb"/></svg></div>
  <div class="t w84"><svg width="36" height="36"><use href="#games"/></svg></div>
  <div class="t run w58"><svg width="39" height="38"><use href="#expl"/></svg></div>
  <div class="stack"></div>
  <div class="t w70"><svg width="35" height="34"><use href="#bee"/></svg></div>
  <div class="t w70"><svg width="35" height="35"><use href="#obs"/></svg></div>
  <div class="t w70"><svg width="38" height="38"><use href="#oll"/></svg></div>
  <div class="t w70"><svg width="38" height="34"><use href="#pc"/></svg></div>
  <div class="t w72"><svg width="38" height="38"><use href="#ff"/></svg></div>
  <div class="t run"><svg width="38" height="38"><use href="#tb"/></svg></div>
  <div class="t"><svg width="38" height="38"><use href="#ecl"/></svg></div>
  <div class="t run"><svg width="35" height="38"><use href="#peng"/></svg></div>
  <div class="t"><svg width="38" height="38"><use href="#cham"/></svg></div>
  <div class="t"><svg width="34" height="34"><use href="#wmp"/></svg></div>
  <div class="t"><svg width="38" height="34"><use href="#msn"/></svg></div>
  <div class="t run"><svg width="38" height="32"><use href="#sticky"/></svg></div>
  <div class="t run"><svg width="38" height="38"><use href="#ecl"/></svg></div>
  <div class="t run"><svg width="36" height="38"><use href="#skype"/></svg></div>
  <div class="t run alert"><svg width="32" height="32"><use href="#bee"/></svg></div>
  <div class="t run active"><svg width="32" height="32"><use href="#bee"/></svg></div>
  <div class="tray">
    <svg class="kbd" width="20" height="17"><path d="M3 5c3-6 5 2 8-1s4-2 5-2" fill="none" stroke="#aaa" stroke-width="1.500"/><path d="M.5 5.500h19v10H.5z" fill="#ddd" stroke="#888"/><path d="M2 8h16M2 10.500h16M4 13h12" stroke="#666" stroke-dasharray="1.500 1"/></svg>
    <svg class="tri" width="10" height="6"><path d="M5 0l5 6H0z" fill="#eef"/></svg>
    <svg class="flag" width="18" height="20"><path d="M1.500 1v18" stroke="#fff" stroke-width="2"/><path d="M3 2c3-1.500 4 0 7 0v7c-3 0-4-1.500-7 0z" fill="#fff"/><path d="M11 5h6l-2 7c-2 0-3-1-4-1z" fill="#ddd"/></svg>
    <svg class="bat" width="19" height="20"><path d="M1.500 3.500h9v15h-9zM4 1h4v2H4z" fill="#224" stroke="#fff" stroke-width="1.800"/><path d="M3 7h6v10H3z" fill="#fff"/><path d="M12.500 2v5M16.500 2v5M11 7h7v4l-2 2h-3l-2-2zM14.500 13v6" fill="#fff" stroke="#fff" stroke-width="1.300"/></svg>
    <div class="clock"><span>19:04</span><span>5-1-2014</span></div>
    <div class="desk"></div>
  </div>
</div>
<script src="map.js"></script>
</body>
</html>
```
FILE: styles.css
```css
* { box-sizing: border-box; }
body { margin: 0; width: 1600px; height: 900px; overflow: hidden; background: #efefef; font-family: "DejaVu Sans Condensed", "DejaVu Sans", sans-serif; font-size: 12px; color: #000; }
.defs { position: absolute; width: 0; height: 0; }
.fit { display: inline-block; flex: none; white-space: pre; transform-origin: 0 50%; }
.window { height: 852px; display: flex; flex-direction: column; }

.titlebar { height: 27px; flex: none; display: flex; align-items: flex-start; padding: 5px 3px 0 2px; border-bottom: 1px solid #2a3a58;
  background:
    radial-gradient(ellipse 22px 9px at 352px 25px, rgba(40,60,90,.55), transparent),
    radial-gradient(ellipse 26px 9px at 502px 24px, rgba(40,60,90,.5), transparent),
    radial-gradient(ellipse 60px 16px at 75px 18px, rgba(255,255,255,.6), transparent),
    linear-gradient(90deg, transparent 1331px, rgba(190,215,225,.75) 1335px, rgba(160,190,220,.7) 1366px, transparent 1370px) 0 9px no-repeat,
    linear-gradient(90deg, transparent 770px, rgba(190,215,210,.7) 800px, rgba(190,215,210,.7) 995px, transparent 1005px) 0 18px no-repeat,
    linear-gradient(90deg, rgba(255,255,255,.25), rgba(255,255,255,.42) 500px, rgba(255,255,255,.4) 900px, transparent 1010px),
    linear-gradient(90deg, #6c9ad0 0, #5a90d0 1000px, #4f8acb 1120px, #4078ba 1200px, #3f74b6 1500px, #3a6cab); }
.ic16 { width: 16px; height: 16px; flex: none; margin-right: 7px; }
.title { font: 15.5px/17px "Open Sans", sans-serif; }
.winctl { display: flex; height: 24px; margin: -6px 0 0 auto; border: 1px solid #26364e; border-radius: 0 0 5px 5px; box-shadow: 0 0 0 1px rgba(255,255,255,.45); overflow: hidden; }
.wbtn { display: flex; align-items: center; justify-content: center; border-right: 1px solid #34465f; box-shadow: inset 0 0 0 1px rgba(255,255,255,.4); background: linear-gradient(#b8cbe0 0 48%, #5e7c9c 50%, #8aa4c0); }
.wbtn.min { width: 36px; padding-top: 8px; background: linear-gradient(#b4c4d8 0 48%, #44505c 50%, #5c6a78); }
.wbtn.max { width: 32px; }
.wbtn.cls { width: 59px; border: 0; background: linear-gradient(#e0a094 0 48%, #b83020 50%, #d05838); }

.menubar { height: 25px; flex: none; display: flex; gap: 9.200px; padding: 0 0 1px 4px; align-items: center; font: 15.500px/22px "Open Sans", sans-serif; border-bottom: 1px solid #989ca6; background: linear-gradient(#fff 0, #e7ecf6 8px, #d3daec 9px, #e1e5f4 100%); }

.toolbars { height: 48px; flex: none; display: flex; flex-direction: column; border-top: 1px solid #fbfbfb; }
.tb { height: 23px; display: flex; align-items: center; }
.tb + .tb { height: 25px; }
.tb > svg { width: 16px; height: 16px; margin-right: 5px; flex: none; }
.tb > svg.wide { width: 22px; margin-right: 5px; }
.tb > svg.wide.last { margin-right: 3px; }
.tb > svg.g3 { margin-left: 3px; }
.tb > svg.g6 { margin-left: 5px; }
.tb > svg.tight { margin-right: 3px; }
.sep { width: 1px; height: 18px; background: #85888e; margin: 0 4px 0 -1px; flex: none; }
.sep.first { margin: 0 5px 0 2px; }
.sep.s2 { margin: 0 3px 0 5px; }
.sep.s3 { margin: 0 5px 0 1px; }
.sep.s4 { margin: 0 3px 0 2px; }
.combo { height: 22px; border: 1px solid #9a9da4; background: #fff; box-shadow: inset -1px -1px 0 #ccc, inset 1px 1px 0 #c8cad0; display: flex; align-items: center; padding-left: 2px; flex: none; overflow: hidden; }
.combo b { width: 16px; height: 18px; margin: 0 1px 0 auto; background: linear-gradient(#fafafa, #e0e0e0); display: flex; align-items: center; justify-content: center; flex: none; }
.combo b::after { content: ""; border: 4.500px solid transparent; border-top: 5px solid #000; border-bottom: 0; }
.combo.grey { background: linear-gradient(#f4f4f4, #dedede); }
.combo.grey b, .combo.flat b { background: none; }
.combo.grey b { width: 14px; }
.w189 { width: 189px; margin-left: -1px; } .w89 { width: 89px; } .w88 { width: 88px; margin-left: 1px; } .w41 { width: 41px; margin-left: 1px; }
.w193 { width: 194px; margin-left: -2px; } .w157 { width: 157px; } .w242 { width: 241px; } .w238 { width: 238px; }
.w193 b { width: 14px; }
.tgl { width: 20px; height: 20px; border: 1.500px solid #555; border-radius: 3px; background: #dcdcdc; display: flex; align-items: center; justify-content: center; flex: none; box-shadow: inset 1px 1px 1px #aaa; }
.tgl svg { width: 16px; height: 16px; }
.bold { font: 700 19px/18px "Liberation Serif", serif; }
.ital { width: 19px; text-align: center; font: italic 400 20px/18px "Liberation Serif", serif; -webkit-text-stroke: .5px #000; }
.cb { width: 16px; height: 16px; border: 1px solid #8a8d92; background: linear-gradient(135deg, #cfd2d8, #f6f6f6); box-shadow: inset 0 0 0 2px #f4f4f4; margin: 0 4px 0 5px; flex: none; }
.cb.c2 { margin-left: 9px; }

.work { flex: 1; display: flex; min-height: 0; border: 1px solid #828790; border-width: 1px 1px 2px 1px; }
.icons { width: 32px; padding: 2px 0 0 6px; overflow: hidden; display: flex; flex-direction: column; gap: 4.850px; }
.icons svg { width: 16px; height: 16px; margin-left: 1px; flex: none; }
.icons svg.bin { height: 18px; margin-bottom: -1px; }
.icons i { height: 1px; flex: none; width: 25px; margin: 2px 0 1px -3px; background: #888; }
.vscroll { width: 19px; display: flex; flex-direction: column; align-items: center; background: #ececec; border-left: 1px solid #e2e2e2; }
.vscroll em { height: 22px; flex: none; display: flex; align-items: center; }
.vscroll em::after, .hscroll em::after { content: ""; border: 4.500px solid transparent; }
em.up::after { border-bottom: 5px solid #333; border-top: 0; }
em.down { margin-top: auto; }
em.down::after { border-top: 5px solid #333; border-bottom: 0; }
.vscroll .thumb { width: 18px; border: 1px solid #8e9197; border-radius: 2px; background: linear-gradient(90deg, #f4f4f4, #e6e6e8 40%, #d0d1d4 45%, #dcdcde 90%); display: flex; align-items: center; justify-content: center; flex: none; }
.vscroll u { width: 9px; height: 10px; background: repeating-linear-gradient(#555 0 1.300px, #fafafa 1.300px 2.500px, transparent 2.500px 4px); }
.vscroll.left { width: 19px; padding-right: 1px; border-right: 0; }
.left .thumb { height: 226px; }
.view { flex: 1; display: grid; grid-template: 1fr 20px / 1fr 19px; margin-left: 1px; border-left: 2px solid #828790; background: #fff; min-width: 0; }
#map { width: 1524px; height: 710px; display: block; background: #fff; }
.vscroll.right { align-items: flex-start; }
.right em { margin-left: 4px; }
.right .thumb { height: 225px; margin-top: 217px; }
.hscroll { display: flex; align-items: center; background: #ececec; border-top: 1px solid #e2e2e2; }
.hscroll em { width: 19px; display: flex; justify-content: center; }
.hscroll .thumb { width: 494px; height: 19px; margin-left: 502px; border: 1px solid #8e9197; border-radius: 2px; background: linear-gradient(#f4f4f4, #e6e6e8 40%, #d0d1d4 45%, #dcdcde 90%); display: flex; align-items: center; justify-content: center; }
.hscroll u { width: 10px; height: 9px; background: repeating-linear-gradient(90deg, #555 0 1.300px, #fafafa 1.300px 2.500px, transparent 2.500px 4px); }
em.lt::after { border-right: 5px solid #333 !important; border-left: 0 !important; }
em.rt { margin: 0 3px 0 auto; }
em.rt::after { border-left: 5px solid #333 !important; border-right: 0 !important; }
.corner { background: #efefef; }

.status { height: 20px; flex: none; display: flex; gap: 5px; padding-left: 3px; background: #efefef; }
.abc { width: 23px; height: 18px; background: #fff; border: 1px solid #aaa; border-bottom: 2px solid #888; text-align: center; font: 700 12.500px/15px "Liberation Sans", sans-serif; color: #1c1c60; letter-spacing: -.3px; }
.abc small { font-size: 10.500px; }
.msg { width: 1092px; height: 19px; border: 1px solid #a0a0a0; padding-left: 1px; font-size: 12.500px; line-height: 19px; }

.taskbar { height: 48px; display: flex; align-items: stretch; border-top: 1px solid #05101f; box-shadow: inset 0 1px 0 #6884a8; padding-left: 8px;
  background: radial-gradient(ellipse 22px 9px at 810px 4px, rgba(20,20,30,.7), transparent), radial-gradient(ellipse 22px 9px at 925px 6px, rgba(20,20,30,.7), transparent), linear-gradient(90deg, #14263f 0, #173050 200px, #1b3c6c 500px, #244a80 800px, #1f427a 1250px, #24497f 1340px, #1a2f50 1390px, #182a46 1600px); }
.t { width: 66px; margin-right: 4.060px; flex: none; display: flex; align-items: center; justify-content: center; }
.t-orb { width: 50px; margin-right: 0; }
.w84 { width: 84px; padding-left: 10px; margin-right: 0; }
.w58 { width: 58px; margin-right: 0; }
.w70 { width: 70px; margin-right: 0; }
.w72 { width: 71.500px; margin-right: 0; }
.run { border: 1px solid #a8bcd4; border-radius: 3px; box-shadow: inset 0 0 0 1px rgba(255,255,255,.15); background: linear-gradient(160deg, rgba(200,215,235,.65) 0, rgba(150,175,210,.45) 48%, rgba(110,145,190,.35) 52%, rgba(120,150,190,.5)); }
.run.alert { background: linear-gradient(160deg, #f8f0a0 0, #f0c848 45%, #e08828 60%, #c86420); border-color: #f8e8a0; }
.run.active { background: linear-gradient(160deg, #d8e0ea 0, #a8b4c8 48%, #8290ac 52%, #a0acc4); border-color: #e0e8f0; }
.stack { width: 8px; border: 1px solid #6888ac; border-left: 0; box-shadow: inset -3px 0 0 #284870, inset -4px 0 0 #6888ac; border-radius: 0 3px 3px 0; margin-right: 2px; }
.tray { flex: 1; display: flex; align-items: center; color: #fff; }
.kbd { margin: -4px 0 0 39.500px; }
.tri { margin-left: 22px; }
.flag { margin: 0 0 0 19px; }
.bat { margin-left: 12px; }
.clock { width: 92px; display: flex; flex-direction: column; align-items: center; font: 15px/22px "Open Sans", sans-serif; letter-spacing: -.7px; padding-left: 8px; }
.clock span { transform: translateY(1px); }
.desk { width: 12px; height: 45px; margin-left: 4px; border: 1px solid #6c84a0; background: linear-gradient(160deg, #7488a0, #20344f 50%); }

#map text { font-family: "Liberation Sans", Arial, sans-serif; font-size: 16.500px; }
#map .link { fill: #0000ff; }
#map .ul { stroke: #0000ff; stroke-width: 1.200; }
#map .edge { fill: none; stroke: #808080; stroke-width: 1.200; }
#map .cat { fill: #178a8a; font-weight: 700; }
#map .root { font-weight: 700; }
#map .it { font-style: italic; }
#map .fold { fill: #fff; stroke: #888; }
```
FILE: map.js
```js
function fitLabels() {
  document.querySelectorAll('.fit').forEach(function (el) {
    var w = parseFloat(el.dataset.w), n = el.offsetWidth;
    el.style.transform = 'scaleX(' + w / n + ')';
    el.style.marginRight = (w - n) + 'px';
  });
}

// [id, parent, icons, icon x, edge y, text x, text end, edge end, label]
var nodes = [
  ['main', null, 'house', 500, 475.5, 520, 650.5, 652, 'main-organisation'],
  ['s1', 'main', 'house', 674, 462.5, 694, 824.5, 826, 'SubOrganisation1'],
  ['sN', 'main', 'house', 674, 733.5, 694, 826.5, 828, 'SubOrganisationN'],
  ['staff', 's1', 'house', 848, 235.5, 868, 903, 905, 'Staff'],
  ['m1', 's1', 'people', 848, 327.5, 868, 934.5, 936.5, 'Meeting1'],
  ['mN', 's1', 'people', 848, 409.5, 868, 936.5, 938.5, 'MeetingN'],
  ['t1', 's1', 'theme', 848, 516.5, 877, 935.5, 937.5, 'Theme1'],
  ['tN', 's1', 'theme', 848, 625.5, 877, 937.5, 939.5, 'ThemeN'],
  ['f', 's1', 'folder', 848, 652.5, 868, 915, 916.5, 'Folder'],
  ['snel', 's1', 'info', 848, 679.5, 884, 1072.5, 1074, 'document - Snelkoppeling'],
  ['d0', 's1', 'info', 848, 706.5, 884, 975.5, 977.5, 'document.txt'],
  ['cow', 'staff', 'person', 926, 233.5, 946, 1022.5, 1024.5, 'coworker1'],
  ['cd', 'cow', 'dosflash', 1046, 218.5, 1082, 1147.5, 1149.5, 'Dossier1'],
  ['cw', 'cow', 'folder', 1046, 247.5, 1066, 1185.5, 1187.5, 'Workdocuments'],
  ['nm', 'cw', 'folder', 1209, 245.5, 1229, 1318.5, 1320.5, 'Nieuwe map'],
  ['y12', 'm1', 'folder', 958, 274.5, 978, 1014.5, 1016.5, '2012'],
  ['y13', 'm1', 'folder', 958, 341.5, 978, 1014.5, 1016.5, '2013'],
  ['a', 'y13', 'folder', 1038, 301.5, 1058, 1094.5, 1096.5, '0215'],
  ['b', 'y13', 'folder', 1038, 355.5, 1058, 1094.5, 1096.5, '0315'],
  ['b1', 'b', 'info', 1118, 328.5, 1154, 1244.5, 1246.5, '1-Bijlage.odt'],
  ['b2', 'b', 'info', 1118, 355.5, 1154, 1237.5, 1239.5, 'Agenda.odt'],
  ['b3', 'b', 'info', 1118, 382.5, 1154, 1235.5, 1237.5, 'Notulen.odt'],
  ['do1', 't1', 'dos', 959, 503.5, 979, 1044.5, 1046.5, 'Dossier1'],
  ['doN', 't1', 'dos', 959, 598.5, 979, 1046.5, 1048.5, 'DossierN'],
  ['fo1', 'do1', 'folder', 1068, 476.5, 1088, 1143.5, 1145.5, 'Folder1'],
  ['foN', 'do1', 'folder', 1068, 544.5, 1088, 1145.5, 1147.5, 'FolderN'],
  ['dd', 'do1', 'info', 1068, 571.5, 1104, 1195.5, 1197.5, 'document.txt'],
  ['sf', 'fo1', 'folder', 1167, 463.5, 1187, 1262.5, 1265, 'SubFolder'],
  ['sd', 'fo1', 'info', 1167, 517.5, 1203, 1294.5, 1296.5, 'document.txt'],
  ['k2', 'sf', 'info', 1286, 436.5, 1322, 1494.5, 1496.5, 'document - kopie (2).txt'],
  ['k1', 'sf', 'info', 1286, 463.5, 1322, 1468.5, 1470.5, 'document - kopie.txt'],
  ['k0', 'sf', 'info', 1286, 490.5, 1322, 1413.5, 1415.5, 'document.txt']
];

function use(id, x, y, w, h) {
  return '<use href="#' + id + '" x="' + x + '" y="' + y + '" width="' + w + '" height="' + h + '"/>';
}
function text(cls, x, end, y, s) {
  return '<text class="' + cls + '" x="' + x + '" y="' + y + '" textLength="' + (end - x) + '" lengthAdjust="spacingAndGlyphs">' + s + '</text>';
}
function edge(d) { return '<path class="edge" d="' + d + '"/>'; }
function tri(x, y) { return '<path class="fold" d="M' + x + ' ' + y + 'h8l-4 5z"/>'; }

function drawMap() {
  var out = '<rect x="403" y="184.500" width="1103.500" height="558.500" rx="5" fill="#efefef" stroke="#a0a0a0" stroke-width="3"/>';
  var by = {};
  nodes.forEach(function (n) { by[n[0]] = n; });
  nodes.forEach(function (n) {
    var ic = n[2], x = n[3], e = n[4], p = by[n[1]], sx = x - 2;
    if (p) {
      var px = p[7], py = p[4];
      out += edge('M' + px + ' ' + py + 'C' + (px + 12) + ' ' + py + ' ' + (sx - 15) + ' ' + e + ' ' + sx + ' ' + e + 'H' + n[7]);
    } else {
      out += edge('M482 473.500C487 473.500 486 475.500 492 475.500H' + n[7]);
    }
    var top = e - 24.5;
    if (ic === 'dosflash') out += use('dos', x, top, 16, 16) + use('flash', x + 16, top, 16, 16);
    else if (ic === 'theme') out += use('theme', x, top, 25, 16);
    else out += use(ic, x, top, 16, 16);
    if (ic === 'info') out += use('note-r', x + 18, top + 4, 12, 8);
    out += text('link', n[5], n[6], e - 6, n[8]);
    out += '<path class="ul" d="M' + n[5] + ' ' + (e - 4) + 'H' + n[6] + '"/>';
  });

  out += edge('M392 461.500C401 461.500 399 473.500 409 473.500H482');
  out += '<rect x="410" y="447.500" width="71.500" height="36" rx="7" fill="none" stroke="#0a1e80" stroke-width="2"/>';
  out += use('note-r', 416, 454, 12, 8) + text('cat', 434, 476, 467, 'Index') + tri(413.5, 475);

  out += edge('M225 401.500C243 401.500 236 440 250 443') + edge('M225 446.500C240 446.500 234 456.500 247 456.500');
  out += edge('M225 491.500C240 491.500 232 472.500 247 472.500') + edge('M162 545.500H226C243 545.500 240 489 255 488');
  out += '<ellipse cx="318.500" cy="462" rx="73" ry="53.500" fill="#99ccff" stroke="#808080"/>';
  out += text('root', 255, 380.5, 458, 'ORGANISATION') + text('root it', 282.5, 355, 481, 'Demo_en') + tri(246.5, 517.5);

  out += '<g stroke="#808080"><rect x="100.500" y="387.500" width="124" height="27" rx="5" fill="#fff"/><rect x="105.500" y="432.500" width="119" height="27" rx="5" fill="#ff0"/><rect x="105.500" y="477.500" width="119" height="27" rx="5" fill="#fff"/><circle cx="97.500" cy="401.500" r="3" fill="#fff"/><circle cx="102.500" cy="446.500" r="3" fill="#fff"/></g>';
  out += use('gear', 103, 390, 16, 16) + text('cat', 123, 221.5, 407, 'Management') + tri(101.5, 417.5);
  out += use('q', 107.5, 435, 16, 16) + use('note-r', 126, 439, 12, 8) + text('cat', 144, 179, 452, 'Help') + tri(106.5, 462.5);
  out += use('bulb', 108, 480, 16, 16) + text('cat', 128, 200.5, 497, 'Favorites') + tri(106.5, 507.5);
  out += use('goback', 164, 522, 16, 16) + text('cat', 184, 223, 539, 'Back');
  document.getElementById('map').innerHTML = out;
}

drawMap();
fitLabels();
```
